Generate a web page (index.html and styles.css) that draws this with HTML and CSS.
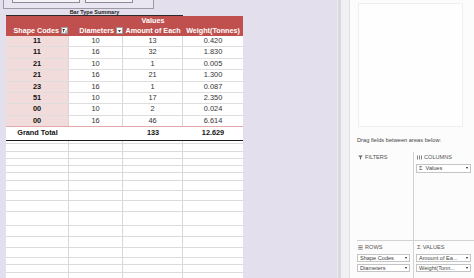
FILE: index.html
```html
<!DOCTYPE html>
<html>
<head>
<meta charset="utf-8">
<link rel="stylesheet" href="styles.css">
</head>
<body>
<div class="app">
  <div class="sheet">
    <div class="slicer"><div class="sbtn w1"></div><div class="sbtn w2"></div></div>
    <div class="title">Bar Type Summary</div>
    <div class="pivot">
      <div class="hdr">
        <div class="hrow r1"><div></div><div></div><div class="hc">Values</div><div></div></div>
        <div class="hrow r2">
          <div class="hc right">Shape Codes<span class="fbtn"><svg width="6" height="6" viewBox="0 0 6 6"><path d="M0.3 0.6h3.4L2.4 2.4v2.4l-0.8-0.5V2.4z" fill="#222"/><path d="M4 2.6h1.6L4.8 3.8z M4.4 3.8h0.8v1.6h-0.8z" fill="#222"/></svg></span></div>
          <div class="hc right">Diameters<span class="fbtn"><svg width="6" height="6" viewBox="0 0 6 6"><path d="M1 2h4L3 4.3z" fill="#111"/></svg></span></div>
          <div class="hc">Amount of Each</div>
          <div class="hc">Weight(Tonnes)</div>
        </div>
      </div>
      <div class="row d"><div class="c1">11</div><div>10</div><div>13</div><div>0.420</div></div>
      <div class="row d"><div class="c1">11</div><div>16</div><div>32</div><div>1.830</div></div>
      <div class="row d"><div class="c1">21</div><div>10</div><div>1</div><div>0.005</div></div>
      <div class="row d"><div class="c1">21</div><div>16</div><div>21</div><div>1.300</div></div>
      <div class="row d"><div class="c1">23</div><div>16</div><div>1</div><div>0.087</div></div>
      <div class="row d"><div class="c1">51</div><div>10</div><div>17</div><div>2.350</div></div>
      <div class="row d"><div class="c1">00</div><div>10</div><div>2</div><div>0.024</div></div>
      <div class="row d last"><div class="c1">00</div><div>16</div><div>46</div><div>6.614</div></div>
      <div class="row total"><div>Grand Total</div><div></div><div>133</div><div>12.629</div></div>
      <div class="row e h3"><div></div><div></div><div></div><div></div></div>
      <div class="row e h8"><div></div><div></div><div></div><div></div></div>
      <div class="row e h7"><div></div><div></div><div></div><div></div></div>
      <div class="row e h7"><div></div><div></div><div></div><div></div></div>
      <div class="row e h7"><div></div><div></div><div></div><div></div></div>
      <div class="row e h8"><div></div><div></div><div></div><div></div></div>
      <div class="row e h10"><div></div><div></div><div></div><div></div></div>
      <div class="row e h10"><div></div><div></div><div></div><div></div></div>
      <div class="row e h11"><div></div><div></div><div></div><div></div></div>
      <div class="row e h14"><div></div><div></div><div></div><div></div></div>
      <div class="row e h11"><div></div><div></div><div></div><div></div></div>
      <div class="row e h11"><div></div><div></div><div></div><div></div></div>
      <div class="row e h10"><div></div><div></div><div></div><div></div></div>
      <div class="row e h7"><div></div><div></div><div></div><div></div></div>
      <div class="row e h8"><div></div><div></div><div></div><div></div></div>
      <div class="row e h10"><div></div><div></div><div></div><div></div></div>
    </div>
  </div>
  <div class="divider"></div>
  <div class="pane">
    <div class="fieldbox"></div>
    <div class="drag">Drag fields between areas below:</div>
    <div class="areas">
      <div class="area">
        <div class="ah"><svg class="ic" width="5" height="5" viewBox="0 0 5 5"><path d="M0.2 0.5h4.6L3 2.5v2.2l-1-0.6V2.5z" fill="#666"/></svg>FILTERS</div>
      </div>
      <div class="area sep">
        <div class="ah"><svg class="ic" width="5" height="5" viewBox="0 0 5 5"><path d="M0.5 0.5v4M2.5 0.5v4M4.5 0.5v4" stroke="#666" stroke-width="0.8"/></svg>COLUMNS</div>
        <div class="dd"><span>Σ&nbsp;&nbsp;Values</span><i></i></div>
      </div>
      <div class="area bot">
        <div class="ah"><svg class="ic" width="5" height="5" viewBox="0 0 5 5"><path d="M0.3 0.8h4.4M0.3 2.5h4.4M0.3 4.2h4.4" stroke="#666" stroke-width="0.8"/></svg>ROWS</div>
        <div class="dd"><span>Shape Codes</span><i></i></div>
        <div class="dd"><span>Diameters</span><i></i></div>
      </div>
      <div class="area sep bot">
        <div class="ah"><span class="sig">Σ</span>VALUES</div>
        <div class="dd"><span>Amount of Ea...</span><i></i></div>
        <div class="dd"><span>Weight(Tonn...</span><i></i></div>
      </div>
    </div>
  </div>
</div>
</body>
</html>
```

FILE: styles.css
```css
* { box-sizing: border-box; margin: 0; padding: 0; }
html, body { width: 474px; height: 278px; overflow: hidden; }
body { background: #e3dfed; font-family: "Liberation Sans", Arial, sans-serif; }
.app { display: flex; height: 278px; }

.sheet { width: 338px; padding-left: 6px; flex: none; border-right: 1px solid #ece9f3; }

.slicer {
  margin-left: -3px; width: 151px; height: 9px;
  border: 1px solid #9c9aa4; border-top: none;
  background: #e9e6f1;
  display: flex; gap: 5px; padding-left: 8px; align-items: flex-start;
}
.sbtn { height: 3px; border: 1px solid #8d8b95; border-top: none; background: #f4f3f8; }
.w1 { width: 68px; }
.w2 { width: 48px; }

.title {
  width: 177px; height: 7px; line-height: 7px;
  font-size: 5.5px; font-weight: bold; color: #222; text-align: center;
  border-bottom: 1px solid #2a2a2a;
}

.pivot { width: 237px; }
.hdr { background: #c0504d; color: #fff; font-weight: bold; font-size: 7.2px; }
.hrow, .row { display: grid; grid-template-columns: 63px 54px 60px 60px; }
.r1 { height: 9px; line-height: 9px; }
.r2 { height: 11px; line-height: 11px; }
.hc { text-align: center; white-space: nowrap; }
.hc.right { display: flex; justify-content: flex-end; align-items: center; padding-right: 1px; }
.r2 .hc.right:nth-child(2) { padding-right: 0; }
.fbtn {
  width: 7px; height: 7px; margin-left: 2px; background: #fff;
  border: 0.5px solid #9a9a9a; display: flex; align-items: center; justify-content: center;
}

.row { background: #fff; border-bottom: 1px solid #dedede; }
.row > div { border-right: 1px solid #d8d8d8; text-align: center; }
.row > div:last-child { border-right: none; }
.d { height: 11.4px; line-height: 10.4px; font-size: 7.4px; color: #333; }
.d .c1 { background: #f2dcdb; font-weight: bold; color: #111; border-right-color: #e0d0cf; }
.d.last { border-bottom-color: #e2aaa8; }
.total { height: 13.6px; line-height: 11.6px; font-size: 7.3px; font-weight: bold; color: #111; border-bottom: 1.6px solid #1c1c1c; }
.total > div { border-right: none; }
.e { border-bottom-color: #dcdcdc; }
.h3 { height: 3px; }
.h7 { height: 7px; }
.h8 { height: 8px; }
.h10 { height: 10px; }
.h11 { height: 11px; }
.h14 { height: 14px; }

.divider {
  width: 12px; flex: none;
  background: #f1f1f3;
  border-left: 3px solid #d9d8de;
  border-right: 1px solid #dfdfdf;
}

.pane { flex: 1; background: #fcfcfc; padding: 3px 0 0 7px; color: #444; }
.fieldbox { width: 105px; height: 124px; border: 1px solid #efefef; background: #fefefe; margin-left: 1px; }
.drag { margin-top: 10px; font-size: 5.7px; line-height: 7px; color: #444; white-space: nowrap; }
.areas {
  margin-top: 8px;
  display: grid; grid-template-columns: 56px 1fr; grid-template-rows: 89px 1fr;
  height: 130px;
}
.area { padding-top: 2px; }
.area.sep { border-left: 1px solid #d2d2d2; padding-left: 2px; }
.area:nth-child(1), .area:nth-child(2) { border-bottom: 1px solid #d2d2d2; }
.area.bot { padding-top: 2.5px; }
.ah { display: flex; align-items: center; font-size: 5.6px; line-height: 7px; color: #555; white-space: nowrap; padding-left: 1px; }
.ic { margin-right: 2px; flex: none; }
.sig { font-size: 6px; margin-right: 2px; color: #666; }
.dd {
  margin-top: 3px; height: 8.5px; width: 54px;
  border: 1px solid #c4c4c4; background: #fff;
  display: flex; align-items: center; justify-content: space-between;
  font-size: 5.6px; color: #444; padding: 0 2px 0 2px; white-space: nowrap;
}
.area.bot .dd { margin-top: 2px; height: 8px; width: 53px; }
.area.bot .dd:nth-child(2) { margin-top: 3.5px; }
.area.sep .dd { width: 55px; }
.dd i {
  width: 0; height: 0; border-left: 1.8px solid transparent; border-right: 1.8px solid transparent;
  border-top: 2.2px solid #222;
}
```
